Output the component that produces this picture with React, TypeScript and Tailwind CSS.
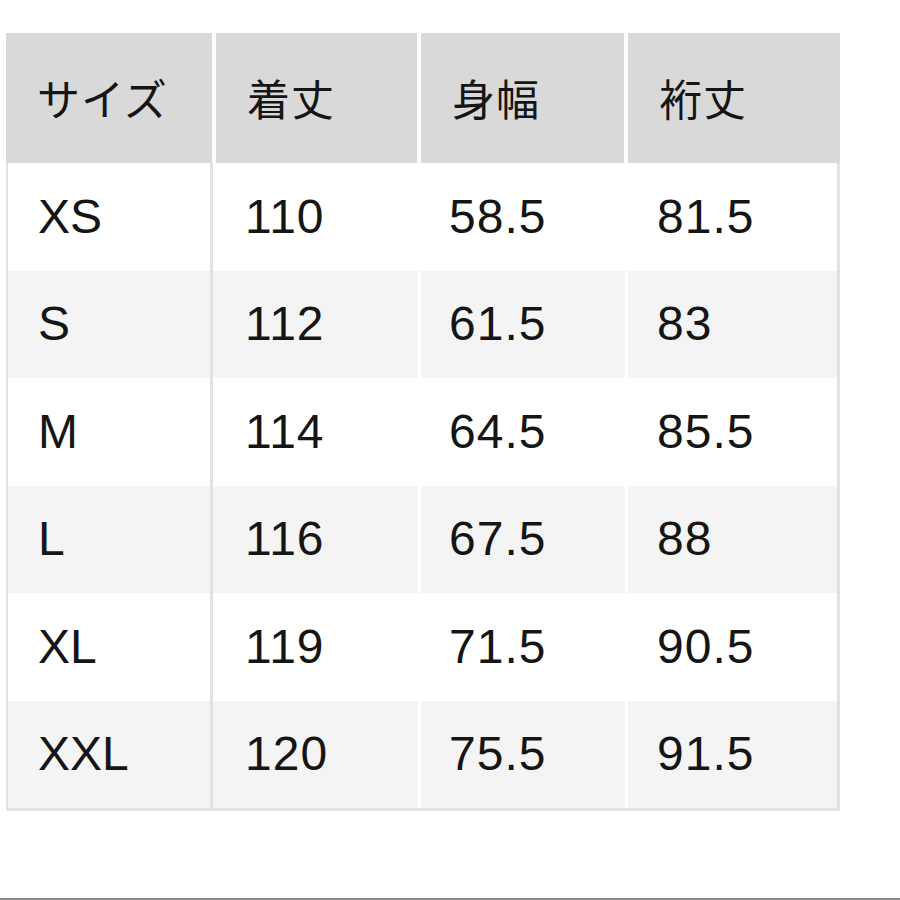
const headers = ["サイズ", "着丈", "身幅", "裄丈"];

const rows = [
  ["XS", "110", "58.5", "81.5"],
  ["S", "112", "61.5", "83"],
  ["M", "114", "64.5", "85.5"],
  ["L", "116", "67.5", "88"],
  ["XL", "119", "71.5", "90.5"],
  ["XXL", "120", "75.5", "91.5"],
];

// header cell widths (white 4px gaps between them)
const headWidths = ["w-[206px]", "w-[201px]", "w-[203px]", "w-[212px]"];

// body cell classes: width + separator on the right
const bodyCells = [
  "w-[207px] border-l-2 border-r-[3px] border-[#e2e2e2] pl-[30px]",
  "w-[208px] border-r-[3px] border-white pl-[32px]",
  "w-[207px] border-r-[3px] border-white pl-[28px]",
  "w-[212px] border-r-[3px] border-[#e2e2e2] pl-[29px]",
];

export default function App() {
  return (
    <div className="w-[900px] h-[900px] bg-white overflow-hidden flex flex-col text-[#151515]">
      <div className="ml-[6px] mt-[33px] w-[834px] border-b-[3px] border-[#e2e2e2]">
        {/* header */}
        <div className="flex gap-[4px] h-[130px] bg-white">
          {headers.map((h, i) => (
            <div
              key={h}
              className={`${headWidths[i]} bg-[#d9d9d9] flex items-center pl-[31px] pb-[2px] text-[43px] leading-none tracking-[1px]`}
              style={{ fontFamily: '"Noto Sans CJK JP", "Noto Sans", sans-serif' }}
            >
              {h}
            </div>
          ))}
        </div>
        {/* body rows */}
        {rows.map((r, ri) => (
          <div
            key={r[0]}
            className={`flex h-[107.5px] ${ri % 2 === 1 ? "bg-[#f4f4f4]" : "bg-white"}`}
          >
            {r.map((c, ci) => (
              <div
                key={ci}
                className={`${bodyCells[ci]} flex items-center text-[48px] leading-none ${ci > 0 ? "tracking-[1px]" : ""}`}
                style={{ fontFamily: '"Liberation Sans", Arial, sans-serif' }}
              >
                {c}
              </div>
            ))}
          </div>
        ))}
      </div>
      <div className="mt-auto h-[2px] bg-[#8c8c8c]" />
    </div>
  );
}
